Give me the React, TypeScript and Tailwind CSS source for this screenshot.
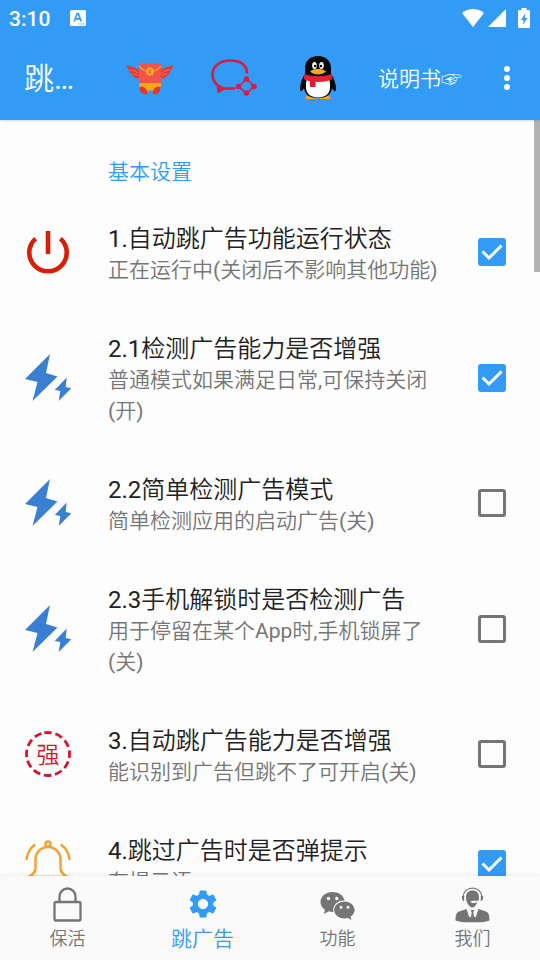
import { useState } from 'react';
import type { ReactNode } from 'react';
import { MdSettings } from 'react-icons/md';

interface Setting {
  id: string;
  title: string;
  summary: string;
  icon: ReactNode;
  checked: boolean;
}

function PowerIcon() {
  return (
    <svg viewBox="0 0 48 48" className="size-12" fill="none" stroke="#d81e06" strokeWidth="4.6">
      <path d="M11.6 10.6A18.7 18.7 0 1 0 36.4 10.6" />
      <path d="M24 3V26" />
    </svg>
  );
}

function BoltIcon() {
  return (
    <svg viewBox="0 0 48 48" className="size-12" fill="#3a80d2">
      <path d="M26 0 1 25l12.5 3L8.5 47l25-24.500L22 19Z" />
      <path d="M42.700 23.500 30.700 36l5.600 1-1.600 10 12.600-12.700-5.600-1.300Z" />
    </svg>
  );
}

function StrongIcon() {
  return (
    <svg viewBox="0 0 48 48" className="size-12">
      <circle cx="24" cy="24" r="21.500" fill="none" stroke="#d5142c" strokeWidth="2.800" strokeDasharray="7.400 3.860" strokeLinecap="butt" transform="rotate(-100 24 24)" />
      <text x="24" y="33" textAnchor="middle" fill="#d5142c" className="text-[23px] font-[350]">强</text>
    </svg>
  );
}

function BellIcon() {
  return (
    <svg viewBox="0 0 48 48" className="size-12" fill="none" stroke="#f5a12f" strokeWidth="2.400" strokeLinecap="round">
      <circle cx="24" cy="4" r="2.600" />
      <path d="M4 37c4-2 7.500-4 7.500-9v-8.500a12.500 12.500 0 0 1 25 0V28c0 5 3.500 7 7.500 9Z" />
      <path d="M2.500 19C3.500 13 6.500 8 10.500 5M45.500 19c-1-6-4-11-8-14" />
      <path d="M19 42a5 4 0 0 0 10 0" />
    </svg>
  );
}

function WingedPacketIcon() {
  return (
    <svg viewBox="0 0 48 44" className="h-11 w-12">
      <path d="M13.500 15C11 11.500 6 11 .5 9c.3 2.500 1.500 4 3 5-.5 1.700.5 3 2 3.700 0 1.500 1 2.600 2.600 3 1.400 1.700 3.400 2 5.400 1.300Z" fill="#e8392f" />
      <path d="M34.500 15C37 11.500 42 11 47.500 9c-.3 2.500-1.500 4-3 5 .5 1.700-.5 3-2 3.700 0 1.500-1 2.600-2.600 3-1.400 1.700-3.400 2-5.400 1.300Z" fill="#e8392f" />
      <path d="M4 14c3 .2 5.500 1 8 3M6.500 18c2 0 4 .6 5.500 1.500M44 14c-3 .2-5.500 1-8 3M41.500 18c-2 0-4 .6-5.500 1.500" stroke="#f7806a" strokeWidth=".8" fill="none" />
      <path d="M15.500 7h17q2.500 0 2.500 2.500V28H13V9.500Q13 7 15.500 7Z" fill="#f2544a" />
      <path d="M13 27h22c.3 3.500-.8 6.500-4 8.500h-4L24 34l-3 1.500h-4c-3.200-2-4.300-5-4-8.500Z" fill="#fba51a" />
      <path d="M13.500 31c4.500-1 8 1.500 8 7-4 1.300-8-1-8-7ZM34.500 31c-4.500-1-8 1.500-8 7 4 1.300 8-1 8-7Z" fill="#df3a2c" />
      <path d="M13.300 10c2 3 5 5 8 5.500M34.700 10c-2 3-5 5-8 5.500" fill="none" stroke="#fbb22a" strokeWidth="1.100" />
      <circle cx="24" cy="15.500" r="3.900" fill="#fbb22a" />
      <path d="m22.300 13.300 1.700 2.200 1.700-2.200M24 15.500v2.600M22.500 16.300h3" fill="none" stroke="#e2522b" strokeWidth=".9" />
    </svg>
  );
}

function ChatShareIcon() {
  return (
    <svg viewBox="0 0 48 44" className="h-11 w-12" fill="none" stroke="#d61d43" strokeWidth="2.700" strokeLinecap="round" strokeLinejoin="round">
      <path d="M37 16.500C36 8 29 4.500 20 4.500 9.500 4.500 2.500 10.500 2.500 18.500c0 5.500 3 9.500 6.500 12" />
      <path d="M13.500 32.500H24" />
      <path d="m8 30 .5 5.500 5-3Z" fill="#d61d43" />
      <path d="m36.500 23-8 7.500 8 7 8-7Z" strokeWidth="1.600" strokeDasharray="8 3" />
      <g fill="#d61d43" stroke="none">
        <circle cx="36.500" cy="23" r="2.800" />
        <circle cx="28.500" cy="30.500" r="2.800" />
        <circle cx="44" cy="30.500" r="2.800" />
        <circle cx="36.500" cy="37" r="2.800" />
      </g>
    </svg>
  );
}

function PenguinIcon() {
  return (
    <svg viewBox="0 0 48 44" className="h-11 w-12">
      <path d="M14 40c-3 0-4 3-1 3h9l2-3 2 3h9c3 0 2-3-1-3Z" fill="#f5a623" />
      <path d="M24 0c8 0 13 5 13 12v6c3 4 5 10 5 15 0 3-2 3-4-1-1 7-6 10-14 10s-13-3-14-10c-2 4-4 4-4 1 0-5 2-11 5-15v-6C11 5 16 0 24 0Z" fill="#070707" />
      <path d="M13 23h22c1 3 1 5 1 8 0 7-5 10.500-12 10.500S12 38 12 31c0-3 0-5 1-8Z" fill="#fff" />
      <ellipse cx="20.500" cy="9.500" rx="2.300" ry="3.600" fill="#fff" />
      <ellipse cx="27.500" cy="9.500" rx="2.300" ry="3.600" fill="#fff" />
      <circle cx="21.100" cy="10" r="1.200" />
      <circle cx="26.900" cy="10" r="1.200" />
      <path d="M16 15.500c2-2 5-2.500 8-2.500s6 .5 8 2.500c-2 2-5 3-8 3s-6-1-8-3Z" fill="#f5a623" />
      <path d="M10.500 18c8 3 19 3 27 0l1 5c-3 2-8 3-14.500 3s-11-1-14.500-3Z" fill="#e41f35" />
      <path d="M16 24h5.500v7H16Z" fill="#d81e32" />
    </svg>
  );
}

function LockIcon() {
  return (
    <svg viewBox="0 0 36 36" className="size-9" fill="none" stroke="currentColor" strokeWidth="2.300">
      <rect x="4.500" y="15" width="26" height="18.500" rx="1.500" />
      <path d="M9.500 15V9.500a8 8 0 0 1 16 0V15" />
    </svg>
  );
}

function WechatIcon() {
  return (
    <svg viewBox="0 0 36 36" className="size-9" fill="currentColor">
      <path fillRule="evenodd" d="M12.500 5C6 5 .5 9.300.5 15c0 3.200 1.600 5.900 4.500 7.700L4 27l4.800-2.700c1.400.4 3 .7 4.700.6C12 18 18 13 24.500 13.500 23.500 8.300 18.500 5 12.500 5ZM8.500 9.800a1.700 1.700 0 1 1 0 3.400 1.700 1.700 0 0 1 0-3.400Zm8.300 0a1.700 1.700 0 1 1 0 3.400 1.700 1.700 0 0 1 0-3.400Z" />
      <path fillRule="evenodd" d="M24.500 14.500c-5.700 0-10.300 3.800-10.300 8.500s4.600 8.500 10.300 8.500c1.200 0 2.400-.2 3.500-.5l3.500 2-.9-3.500c2.500-1.500 4-3.900 4-6.500 0-4.700-4.500-8.500-10.100-8.500ZM21 18.800a1.500 1.500 0 1 1 0 3 1.500 1.500 0 0 1 0-3Zm7 0a1.500 1.500 0 1 1 0 3 1.500 1.500 0 0 1 0-3Z" />
    </svg>
  );
}

function AgentIcon() {
  return (
    <svg viewBox="0 0 36 36" className="size-9" fill="currentColor">
      <path d="M8 10.500C8.500 4.500 12.500 1.200 17.500 1.200S26.500 4.500 27 10.500" fill="none" stroke="currentColor" strokeWidth="1.300" />
      <path d="M7 9h2.200v5H8.300C7 13 6.500 10.500 7 9ZM28 9h-2.200v5h.9c1.300-1 1.800-3.500 1.300-5Z" />
      <path d="M17.500 3.500c4 0 6.500 2.500 6.500 7 0 1.200-.2 2.200-.5 3.200H18c-1 0-1.800.2-2.500.8.8 1.800 4 2.300 6.800.5-1.200 3.500-3 5.500-4.800 5.500-3.300 0-6.500-5.500-6.500-10 0-4.500 2.500-7 6.500-7Z" />
      <path d="M11.500 22 16 35.300C10 35.500 4 35 .5 33.500.5 28 1.500 25.300 4 24.500ZM23.500 22 19 35.300c6 .2 12-.3 15.500-1.800 0-5.500-1-8.200-3.500-9Z" />
      <path d="M15.700 23h3.600l-1 2.500 1.200 7-2 2.500-2-2.500 1.200-7Z" />
      <path d="M14 30h7l-1 5.300h-5Z" />
    </svg>
  );
}

const initialSettings: Setting[] = [
  { id: 's1', title: '1.自动跳广告功能运行状态', summary: '正在运行中(关闭后不影响其他功能)', icon: <PowerIcon />, checked: true },
  { id: 's21', title: '2.1检测广告能力是否增强', summary: '普通模式如果满足日常,可保持关闭(开)', icon: <BoltIcon />, checked: true },
  { id: 's22', title: '2.2简单检测广告模式', summary: '简单检测应用的启动广告(关)', icon: <BoltIcon />, checked: false },
  { id: 's23', title: '2.3手机解锁时是否检测广告', summary: '用于停留在某个App时,手机锁屏了(关)', icon: <BoltIcon />, checked: false },
  { id: 's3', title: '3.自动跳广告能力是否增强', summary: '能识别到广告但跳不了可开启(关)', icon: <StrongIcon />, checked: false },
  { id: 's4', title: '4.跳过广告时是否弹提示', summary: '有提示语', icon: <BellIcon />, checked: true },
];

const tabs = [
  { label: '保活', icon: <LockIcon /> },
  { label: '跳广告', icon: <MdSettings className="mb-[2px] size-[34px]" /> },
  { label: '功能', icon: <WechatIcon /> },
  { label: '我们', icon: <AgentIcon /> },
];

function StatusBar() {
  return (
    <div className="flex h-9 items-center pl-[9px] pr-[10px]">
      <span className="pt-[2px] text-[21px] font-medium leading-[34px]">3:10</span>
      <svg viewBox="0 0 16 16" className="ml-5 size-4">
        <rect width="16" height="16" rx="1.500" fill="#fff" />
        <path d="m4.200 11.500 3-8h1L11.200 11.500M5.500 8.800h4.500" fill="none" stroke="#329bf5" strokeWidth="1.700" />
        <path d="M8 14h1.300M10.500 14h1.300M13 14h1.300" stroke="#329bf5" strokeWidth="1.200" />
      </svg>
      <div className="ml-auto flex items-center">
        <svg viewBox="0 0 22 20" className="h-5 w-[22px]" fill="#fff">
          <path d="M11 19 0 5C6-.3 16-.3 22 5Z" />
        </svg>
        <svg viewBox="0 0 18 20" className="ml-1 h-5 w-[18px]" fill="#fff">
          <path d="M18 1v18H0Z" />
        </svg>
        <svg viewBox="0 0 12 20" className="ml-3 h-5 w-3">
          <path d="M3.500 0h5v2H11q1 0 1 1v16q0 1-1 1H1q-1 0-1-1V3q0-1 1-1h2.500Z" fill="#fff" />
          <path d="M7.300 5 3 12h2.500L5 17l4.200-7H6.800Z" fill="#329bf5" />
        </svg>
      </div>
    </div>
  );
}

function Toolbar() {
  return (
    <div className="flex h-21 items-center">
      <h1 className="flex-1 pt-[2px] pl-6 text-[30px] leading-10">跳…</h1>
      <button aria-label="红包" className="flex w-21 justify-center"><WingedPacketIcon /></button>
      <button aria-label="分享" className="flex w-21 justify-center"><ChatShareIcon /></button>
      <button aria-label="QQ" className="flex w-21 justify-center"><PenguinIcon /></button>
      <button className="px-[18px] pt-[2px] text-[21px] leading-[31px] whitespace-nowrap">说明书☞</button>
      <button aria-label="更多" className="flex w-15 justify-end pr-[30px]">
        <svg viewBox="0 0 6 24" className="h-6 w-[6px]" fill="#fff">
          <circle cx="3" cy="3" r="3" />
          <circle cx="3" cy="12" r="3" />
          <circle cx="3" cy="21" r="3" />
        </svg>
      </button>
    </div>
  );
}

export default function App() {
  const [settings, setSettings] = useState<Setting[]>(initialSettings);
  const [active, setActive] = useState('跳广告');

  const toggle = (id: string) => {
    setSettings(settings.map((s) => (s.id === id ? { ...s, checked: !s.checked } : s)));
  };

  return (
    <div className="flex h-dvh flex-col bg-[#fdfdfd] text-[#212121] [font-family:Roboto,'Noto_Sans_CJK_SC_DemiLight','Noto_Sans_CJK_SC',sans-serif]">
      <header className="z-10 bg-[#329bf5] text-white shadow-sm">
        <StatusBar />
        <Toolbar />
      </header>

      <main className="relative min-h-0 flex-1">
        <div className="h-full overflow-y-auto [scrollbar-width:none]">
          <h2 className="pt-[37px] pb-[9px] pl-27 text-[21px] leading-[31px] text-[#329bf5]">基本设置</h2>
          {settings.map((s) => (
            <label key={s.id} htmlFor={s.id} className="flex items-center pl-6">
              {s.icon}
              <span className="min-w-0 flex-1 pt-[26px] pb-[21px] pl-9">
                <span className="block text-2xl leading-8">{s.title}</span>
                <span className="block text-[21px] leading-[31px] text-[#757575]">{s.summary}</span>
              </span>
              <span className="grid w-24 place-items-center">
                <input
                  id={s.id}
                  type="checkbox"
                  checked={s.checked}
                  onChange={() => toggle(s.id)}
                  className="peer col-start-1 row-start-1 size-7 appearance-none rounded-[3px] border-3 border-[#757575] checked:border-[#329bf5] checked:bg-[#329bf5]"
                />
                <svg viewBox="0 0 28 28" className="pointer-events-none invisible col-start-1 row-start-1 size-7 peer-checked:visible" fill="none" stroke="#fff" strokeWidth="3">
                  <path d="m4.500 13.500 6.500 6.500L23.500 7.500" />
                </svg>
              </span>
            </label>
          ))}
        </div>
        <div className="absolute top-0 right-0 h-38 w-[6px] bg-[#b3b3b3]" />
      </main>

      <nav className="z-10 grid h-21 grid-cols-4 bg-[#fafafa] shadow-[0_-1px_4px_rgba(0,0,0,0.08)]">
        {tabs.map((t) => (
          <button
            key={t.label}
            onClick={() => setActive(t.label)}
            className={`flex flex-col items-center pt-[11px] ${active === t.label ? 'text-[21px] text-[#329bf5]' : 'text-lg text-[#757575]'}`}
          >
            {t.icon}
            <span className="leading-8">{t.label}</span>
          </button>
        ))}
      </nav>
    </div>
  );
}
